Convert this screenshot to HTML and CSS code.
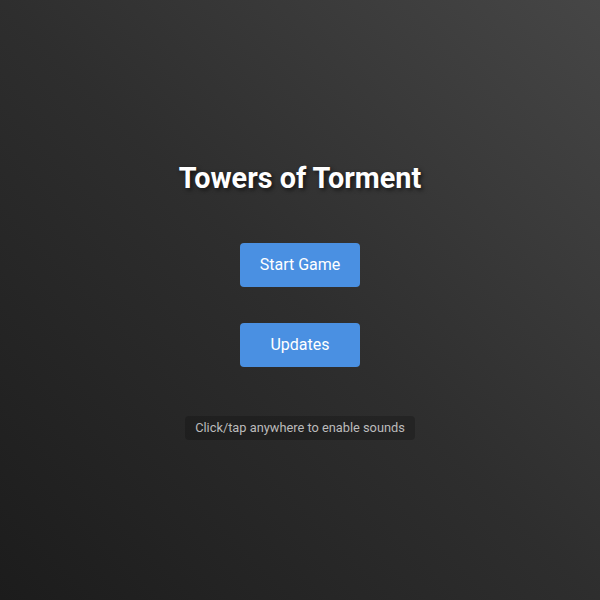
FILE: index.html
```html
<!DOCTYPE html>
<html>
<head>
<meta charset="utf-8">
<link rel="stylesheet" href="styles.css">
</head>
<body>
<main class="menu">
  <h1 class="title">Towers of Torment</h1>
  <button class="btn btn-start">Start Game</button>
  <button class="btn btn-updates">Updates</button>
  <div class="hint">Click/tap anywhere to enable sounds</div>
</main>
</body>
</html>
```
FILE: styles.css
```css
html, body {
  margin: 0;
  padding: 0;
  height: 100%;
}
body {
  background: linear-gradient(45deg, #1c1c1c 0%, #2e2e2e 50%, #464646 100%);
  font-family: Roboto, "Liberation Sans", sans-serif;
  color: #fff;
}
.menu {
  height: 100%;
  display: flex;
  flex-direction: column;
  align-items: center;
  justify-content: center;
}
.title {
  margin: 0 0 48px;
  font-size: 28.8px;
  line-height: 34px;
  font-weight: 700;
  color: #fff;
  text-shadow: 2px 2px 4px rgba(0, 0, 0, 0.6);
}
.btn {
  width: 120px;
  height: 44px;
  border: none;
  border-radius: 4px;
  background: #4a90e2;
  color: #fff;
  font-family: Roboto, "Liberation Sans", sans-serif;
  font-size: 16px;
  padding: 0;
  cursor: pointer;
}
.btn-start {
  margin-bottom: 36px;
}
.btn-updates {
  margin-bottom: 49px;
}
.hint {
  height: 24px;
  line-height: 24px;
  padding: 0 10px;
  border-radius: 4px;
  background: rgba(0, 0, 0, 0.2);
  color: #bbb;
  font-size: 12.8px;
}
```
